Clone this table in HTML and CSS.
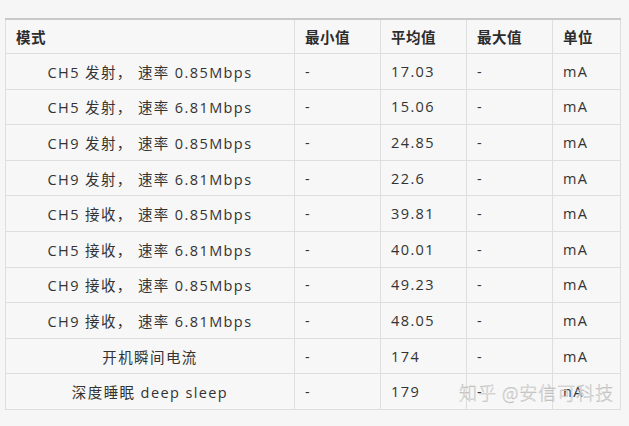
FILE: index.html
```html
<!DOCTYPE html>
<html lang="zh">
<head>
<meta charset="utf-8">
<link rel="stylesheet" href="styles.css">
</head>
<body>
<div class="wrap">
<table class="data">
  <colgroup>
    <col class="c-mode"><col class="c-num"><col class="c-num"><col class="c-num"><col class="c-unit">
  </colgroup>
  <thead>
    <tr><th>模式</th><th>最小值</th><th>平均值</th><th>最大值</th><th>单位</th></tr>
  </thead>
  <tbody>
    <tr><td class="mode">CH5 发射， 速率 0.85Mbps</td><td>-</td><td>17.03</td><td>-</td><td>mA</td></tr>
    <tr><td class="mode">CH5 发射， 速率 6.81Mbps</td><td>-</td><td>15.06</td><td>-</td><td>mA</td></tr>
    <tr><td class="mode">CH9 发射， 速率 0.85Mbps</td><td>-</td><td>24.85</td><td>-</td><td>mA</td></tr>
    <tr><td class="mode">CH9 发射， 速率 6.81Mbps</td><td>-</td><td>22.6</td><td>-</td><td>mA</td></tr>
    <tr><td class="mode">CH5 接收， 速率 0.85Mbps</td><td>-</td><td>39.81</td><td>-</td><td>mA</td></tr>
    <tr><td class="mode">CH5 接收， 速率 6.81Mbps</td><td>-</td><td>40.01</td><td>-</td><td>mA</td></tr>
    <tr><td class="mode">CH9 接收， 速率 0.85Mbps</td><td>-</td><td>49.23</td><td>-</td><td>mA</td></tr>
    <tr><td class="mode">CH9 接收， 速率 6.81Mbps</td><td>-</td><td>48.05</td><td>-</td><td>mA</td></tr>
    <tr><td class="mode">开机瞬间电流</td><td>-</td><td>174</td><td>-</td><td>mA</td></tr>
    <tr><td class="mode">深度睡眠 deep sleep</td><td>-</td><td>179</td><td>-</td><td>nA</td></tr>
  </tbody>
</table>
<div class="watermark">知乎 @安信可科技</div>
</div>
</body>
</html>
```

FILE: styles.css
```css
html, body {
  margin: 0;
  padding: 0;
  background: #f6f6f6;
}
body {
  font-family: "Open Sans", "Noto Sans CJK SC", sans-serif;
  color: #333;
}
.wrap {
  position: relative;
  padding: 18px 0 0 5px;
  width: 614px;
}
.data {
  border-collapse: collapse;
  width: 615px;
  table-layout: fixed;
  background: #f7f7f7;
  border-top: 2px solid #c9c9c9;
}
.c-mode { width: 289px; }
.c-num { width: 86px; }
.c-unit { width: 68px; }
.data th, .data td {
  border: 1px solid #dedede;
  padding: 0 0 0 10px;
  font-size: 14.5px;
  letter-spacing: 1.4px;
  text-align: left;
  white-space: nowrap;
  height: 34.6px;
}
.data th {
  font-family: "Noto Sans CJK SC", sans-serif;
  font-weight: 700;
  height: 33px;
  color: #2c2c2c;
  letter-spacing: 0.5px;
}
.data td.mode {
  text-align: center;
  padding: 0;
}
.data thead tr th { border-top: 0; }
.watermark {
  position: absolute;
  left: 459px;
  top: 379px;
  font-family: "Noto Sans CJK SC", sans-serif;
  font-weight: 300;
  font-size: 18px;
  letter-spacing: 1px;
  color: rgba(255, 255, 255, 0.85);
  -webkit-text-stroke: 0.45px #b8b8b8;
}
```
